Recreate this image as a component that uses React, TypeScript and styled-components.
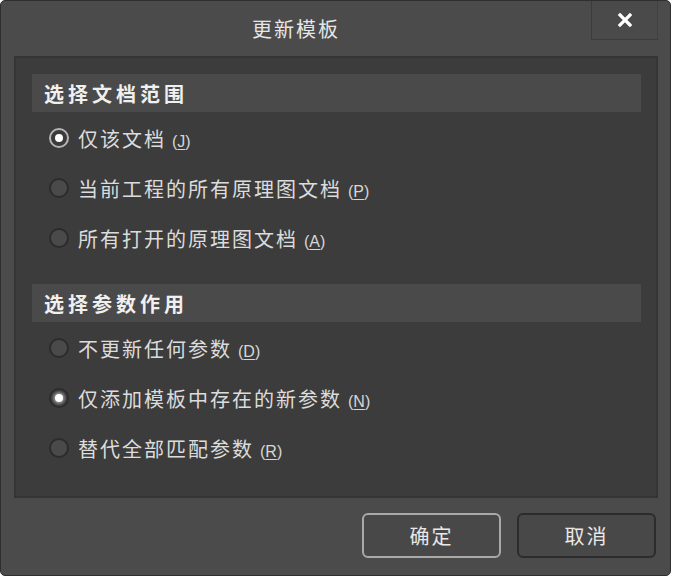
import React from "react";
import styled, { createGlobalStyle } from "styled-components";

const Global = createGlobalStyle`
  html, body { margin: 0; padding: 0; background: #ffffff; }
  body { font-family: "Noto Sans CJK SC", "Noto Sans", sans-serif; }
`;

const Dialog = styled.div`
  width: 671px;
  height: 576px;
  box-sizing: border-box;
  background: #4b4b4b;
  border: 1px solid #2f2f2f;
  border-radius: 5px;
  display: flex;
  flex-direction: column;
  overflow: hidden;
`;

const TitleBar = styled.div`
  height: 55px;
  display: flex;
  align-items: flex-start;
  padding-right: 12px;
  flex-shrink: 0;
`;

const Title = styled.div`
  flex: 1;
  height: 55px;
  display: flex;
  align-items: center;
  justify-content: center;
  color: #e6e6e6;
  font-size: 20px;
  letter-spacing: 2px;
`;

const CloseButton = styled.div`
  width: 65px;
  height: 39px;
  margin-top: -1px;
  border-left: 1px solid #3c3c3c;
  border-bottom: 1px solid #3c3c3c;
  border-right: 1px solid #424242;
  background: #4a4a4a;
  display: flex;
  align-items: center;
  justify-content: center;
`;

const Panel = styled.div`
  margin: 0 12px 0 13px;
  height: 442px;
  box-sizing: border-box;
  background: #3c3c3c;
  border: 2px solid #353535;
  padding: 16px 15px 0 16px;
  display: flex;
  flex-direction: column;
`;

const Section = styled.div<{ $gap?: number }>`
  display: flex;
  flex-direction: column;
  margin-top: ${(p) => p.$gap ?? 0}px;
`;

const SectionHeader = styled.div`
  height: 38px;
  background: #4a4a4a;
  display: flex;
  align-items: center;
  padding-left: 12px;
  color: #f0f0f0;
  font-size: 20px;
  font-weight: 700;
  letter-spacing: 4px;
`;

const List = styled.div`
  padding-top: 1px;
  display: flex;
  flex-direction: column;
`;

const Row = styled.div`
  height: 50px;
  display: flex;
  align-items: center;
  padding-left: 17px;
  gap: 9px;
  color: #dcdcdc;
  font-size: 20px;
  letter-spacing: 2px;
`;

const Radio = styled.span<{ $checked?: boolean; $style?: "ring" | "glow" }>`
  width: 20px;
  height: 20px;
  box-sizing: border-box;
  border-radius: 50%;
  flex-shrink: 0;
  position: relative;
  background: ${(p) => (p.$checked ? "#3a3a3a" : "#4a4a4a")};
  border: 2px solid
    ${(p) => (p.$checked && p.$style === "ring" ? "#b4b4b4" : "#2c2c2c")};
  &::after {
    content: "";
    display: ${(p) => (p.$checked ? "block" : "none")};
    position: absolute;
    left: 50%;
    top: 50%;
    width: 8px;
    height: 8px;
    margin: -4px 0 0 -4px;
    border-radius: 50%;
    background: #ffffff;
    box-shadow: ${(p) =>
      p.$style === "glow" ? "0 0 3px 2px rgba(255,255,255,0.45)" : "none"};
  }
`;

const Mnemonic = styled.span`
  font-family: "Liberation Sans", "Noto Sans", sans-serif;
  font-size: 16px;
  letter-spacing: 0;
  margin-left: 6px;
  color: #d6d6d6;
  u { text-decoration: underline; text-underline-offset: 2px; }
`;

const Footer = styled.div`
  flex: 1;
  display: flex;
  justify-content: flex-end;
  align-items: flex-start;
  padding: 15px 14px 0 0;
  gap: 16px;
`;

const Button = styled.div<{ $primary?: boolean }>`
  width: 139px;
  height: 45px;
  box-sizing: border-box;
  border-radius: 6px;
  border: ${(p) => (p.$primary ? "2px solid #a9a9a9" : "2px solid #2c2c2c")};
  background: #484848;
  color: #e8e8e8;
  font-size: 20px;
  letter-spacing: 2px;
  display: flex;
  align-items: center;
  justify-content: center;
`;

type Opt = { label: string; key: string; checked?: boolean; style?: "ring" | "glow" };

const scope: Opt[] = [
  { label: "仅该文档", key: "J", checked: true, style: "ring" },
  { label: "当前工程的所有原理图文档", key: "P" },
  { label: "所有打开的原理图文档", key: "A" },
];

const params: Opt[] = [
  { label: "不更新任何参数", key: "D" },
  { label: "仅添加模板中存在的新参数", key: "N", checked: true, style: "glow" },
  { label: "替代全部匹配参数", key: "R" },
];

const Options = ({ items }: { items: Opt[] }) => (
  <List>
    {items.map((o) => (
      <Row key={o.key}>
        <Radio $checked={o.checked} $style={o.style} />
        <span>
          {o.label}
          <Mnemonic>
            (<u>{o.key}</u>)
          </Mnemonic>
        </span>
      </Row>
    ))}
  </List>
);

export default function App() {
  return (
    <>
      <Global />
      <Dialog>
        <TitleBar>
          <Title>更新模板</Title>
          <CloseButton>
            <svg width="16" height="16" viewBox="0 0 16 16">
              <path d="M3 3 L13 13 M13 3 L3 13" stroke="#ffffff" strokeWidth="3.2" strokeLinecap="square" />
            </svg>
          </CloseButton>
        </TitleBar>
        <Panel>
          <Section>
            <SectionHeader>选择文档范围</SectionHeader>
            <Options items={scope} />
          </Section>
          <Section $gap={21}>
            <SectionHeader>选择参数作用</SectionHeader>
            <Options items={params} />
          </Section>
        </Panel>
        <Footer>
          <Button $primary>确定</Button>
          <Button>取消</Button>
        </Footer>
      </Dialog>
    </>
  );
}
